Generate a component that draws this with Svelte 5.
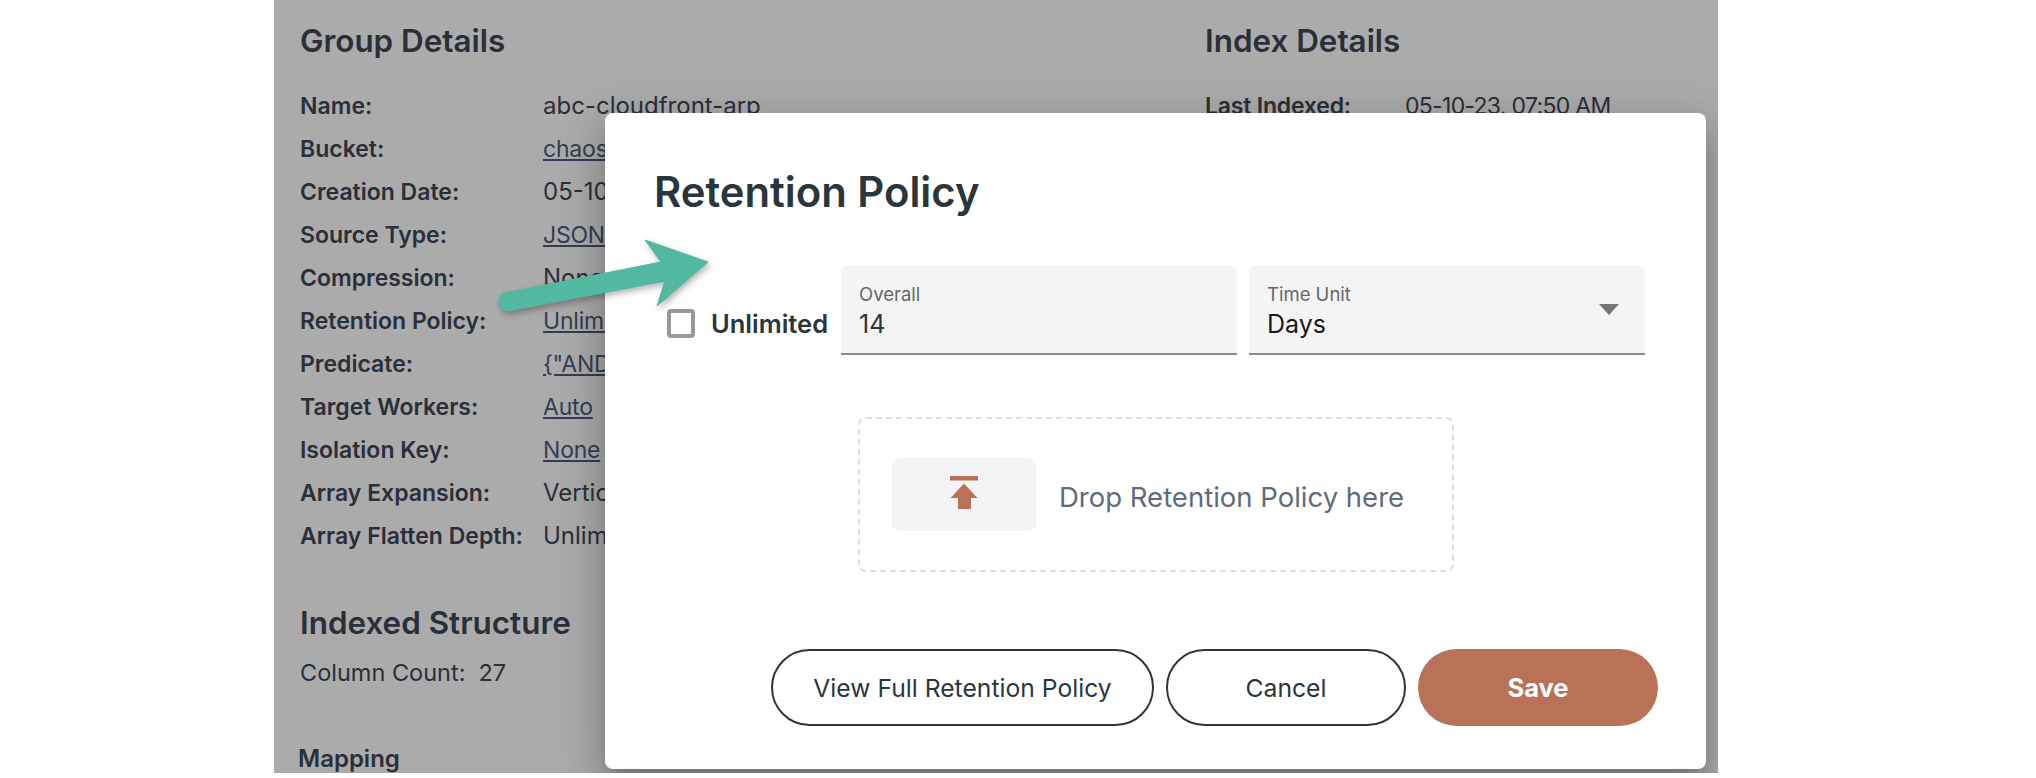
<script lang="ts">
  const groupRows = [
    { label: 'Name:', value: 'abc-cloudfront-arp' },
    { label: 'Bucket:', value: 'chaos-bucket', link: true },
    { label: 'Creation Date:', value: '05-10-23' },
    { label: 'Source Type:', value: 'JSON', link: true },
    { label: 'Compression:', value: 'None' },
    { label: 'Retention Policy:', value: 'Unlimited', link: true },
    { label: 'Predicate:', value: '{"AND":[]}', link: true },
    { label: 'Target Workers:', value: 'Auto', link: true },
    { label: 'Isolation Key:', value: 'None', link: true },
    { label: 'Array Expansion:', value: 'Vertical' },
    { label: 'Array Flatten Depth:', value: 'Unlimited' }
  ];
</script>

<div class="page">
  <div class="backdrop">
    <div class="columns">
      <section class="group">
        <h2>Group Details</h2>
        <div class="rows">
          {#each groupRows as row}
            <div class="row">
              <span class="label">{row.label}</span>
              <span class="value" class:link={row.link}>{row.value}</span>
            </div>
          {/each}
        </div>
        <h2 class="structure">Indexed Structure</h2>
        <div class="count"><span>Column Count:</span><span>27</span></div>
        <div class="mapping">Mapping</div>
      </section>
      <section class="index">
        <h2>Index Details</h2>
        <div class="rows">
          <div class="row">
            <span class="label short">Last Indexed:</span>
            <span class="value date">05-10-23, 07:50 AM</span>
          </div>
        </div>
      </section>
    </div>

    <div class="modal">
      <h1>Retention Policy</h1>
      <div class="form">
        <div class="check">
          <span class="box"></span>
          <span class="check-text">Unlimited</span>
        </div>
        <div class="field overall">
          <span class="field-label">Overall</span>
          <span class="field-value">14</span>
        </div>
        <div class="field unit">
          <span class="field-label">Time Unit</span>
          <span class="field-value days">Days</span>
          <span class="caret"></span>
        </div>
      </div>
      <div class="drop">
        <div class="drop-icon">
          <svg width="30" height="34" viewBox="0 0 30 34">
            <path d="M1 0h28v4.500H1z M15 7.500L28.500 22H22v11H9V22H1.500z" fill="#b97257" />
          </svg>
        </div>
        <span class="drop-text">Drop Retention Policy here</span>
      </div>
      <div class="actions">
        <button class="btn view">View Full Retention Policy</button>
        <button class="btn cancel">Cancel</button>
        <button class="btn save">Save</button>
      </div>
    </div>
  </div>

  <svg class="arrow" width="240" height="90" viewBox="495 232 240 90">
    <path d="M505 293L661 262L645 240L708 262L657 306L665 281L508 311Q501 311.500 499 303Q498 295 505 293z" fill="#52b8a0" stroke="#52b8a0" stroke-width="1" stroke-linejoin="round" />
  </svg>
</div>

<style>
  :global(body) {
    margin: 0;
    background: #fff;
  }
  .page {
    position: relative;
    width: 2036px;
    height: 778px;
    overflow: hidden;
    font-family: Inter, "Liberation Sans", sans-serif;
    color: #2a2f3a;
  }

  /* dimmed page behind the dialog */
  .backdrop {
    position: relative;
    margin-left: 274px;
    width: 1444px;
    height: 773px;
    background: #ababab;
    overflow: hidden;
  }
  .columns {
    display: flex;
    padding: 22px 0 0 26px;
  }
  .group { width: 905px; flex-shrink: 0; }
  h2 {
    margin: 0;
    font-size: 31.400px;
    font-weight: 600;
    line-height: 38px;
  }
  .rows {
    margin-top: 24px;
    display: flex;
    flex-direction: column;
  }
  .row {
    display: flex;
    align-items: center;
    height: 43px;
    font-size: 23px;
  }
  .label { width: 243px; font-weight: 600; flex-shrink: 0; }
  .label.short { width: 200px; letter-spacing: -0.2px; }
  .value { font-weight: 400; font-size: 24px; white-space: nowrap; }
  .value.date { font-size: 23px; letter-spacing: -0.7px; }
  .value.link { font-size: 23px; text-decoration: underline; color: #343e52; letter-spacing: -0.2px; }
  .structure { margin-top: 47px; }
  .count {
    display: flex;
    gap: 13px;
    margin-top: 16px;
    font-size: 23.500px;
    line-height: 30px;
  }
  .mapping {
    margin: 56px 0 0 -2px;
    font-size: 24px;
    font-weight: 600;
    line-height: 30px;
  }

  /* dialog */
  .modal {
    position: absolute;
    left: 331px;
    top: 113px;
    width: 1101px;
    height: 656px;
    box-sizing: border-box;
    padding: 54px 48px 0 49px;
    background: #fff;
    border-radius: 8px;
    box-shadow: 0 11px 15px -7px rgba(0,0,0,.2), 0 24px 38px 3px rgba(0,0,0,.14), 0 9px 46px 8px rgba(0,0,0,.12);
    color: #2a363c;
  }
  h1 {
    margin: 0;
    font-size: 41.800px;
    font-weight: 600;
    line-height: 50px;
  }
  .form {
    display: flex;
    align-items: flex-end;
    margin-top: 49px;
    margin-left: 13px;
    padding-right: 13px;
  }
  .check {
    display: flex;
    align-items: center;
    gap: 16px;
    width: 174px;
    height: 61px;
    margin-bottom: 1px;
    font-size: 25.500px;
    font-weight: 600;
  }
  .box {
    width: 20px;
    height: 21px;
    border: 4px solid #999;
    border-radius: 4px;
  }
  .check-text { white-space: nowrap; }
  .field {
    position: relative;
    display: flex;
    flex-direction: column;
    box-sizing: border-box;
    height: 89px;
    padding: 16px 18px 0 18px;
    background: #f4f4f4;
    border-bottom: 2px solid #8a8a8a;
    border-radius: 6px 6px 0 0;
  }
  .overall { width: 396px; margin-right: 12px; }
  .unit { width: 396px; }
  .field-label { font-size: 18.500px; line-height: 24px; color: #666; }
  .field-value { font-size: 25px; line-height: 36px; color: #2a363c; }
  .days { color: #1a1a1a; }
  .caret {
    position: absolute;
    right: 26px;
    top: 38px;
    width: 0;
    height: 0;
    border-left: 10.500px solid transparent;
    border-right: 10.500px solid transparent;
    border-top: 11px solid #757575;
  }
  .drop {
    display: flex;
    align-items: center;
    gap: 23px;
    box-sizing: border-box;
    width: 596px;
    height: 155px;
    margin: 62px 0 0 204px;
    padding-left: 32px;
    border: 2px dashed #dedede;
    border-radius: 8px;
  }
  .drop-icon {
    display: flex;
    align-items: center;
    justify-content: center;
    width: 144px;
    height: 73px;
    background: #f3f4f6;
    border-radius: 8px;
  }
  .drop-icon svg { margin-bottom: 4px; }
  .drop-text { font-size: 27.500px; color: #5f6b7a; white-space: nowrap; padding-top: 4px; }
  .actions {
    display: flex;
    justify-content: flex-end;
    gap: 12px;
    margin-top: 77px;
  }
  .btn {
    height: 77px;
    box-sizing: border-box;
    border-radius: 39px;
    font: inherit;
    font-size: 24.700px;
    background: #fff;
    color: #2a363c;
    border: 2px solid #2a363c;
  }
  .view { width: 383px; }
  .cancel { width: 240px; }
  .save {
    width: 240px;
    background: #b97257;
    border: none;
    color: #fff;
    font-weight: 700;
    font-size: 25.500px;
  }
  .arrow {
    position: absolute;
    left: 495px;
    top: 232px;
    filter: drop-shadow(2px 3px 3px rgba(0,0,0,.3));
  }
</style>
